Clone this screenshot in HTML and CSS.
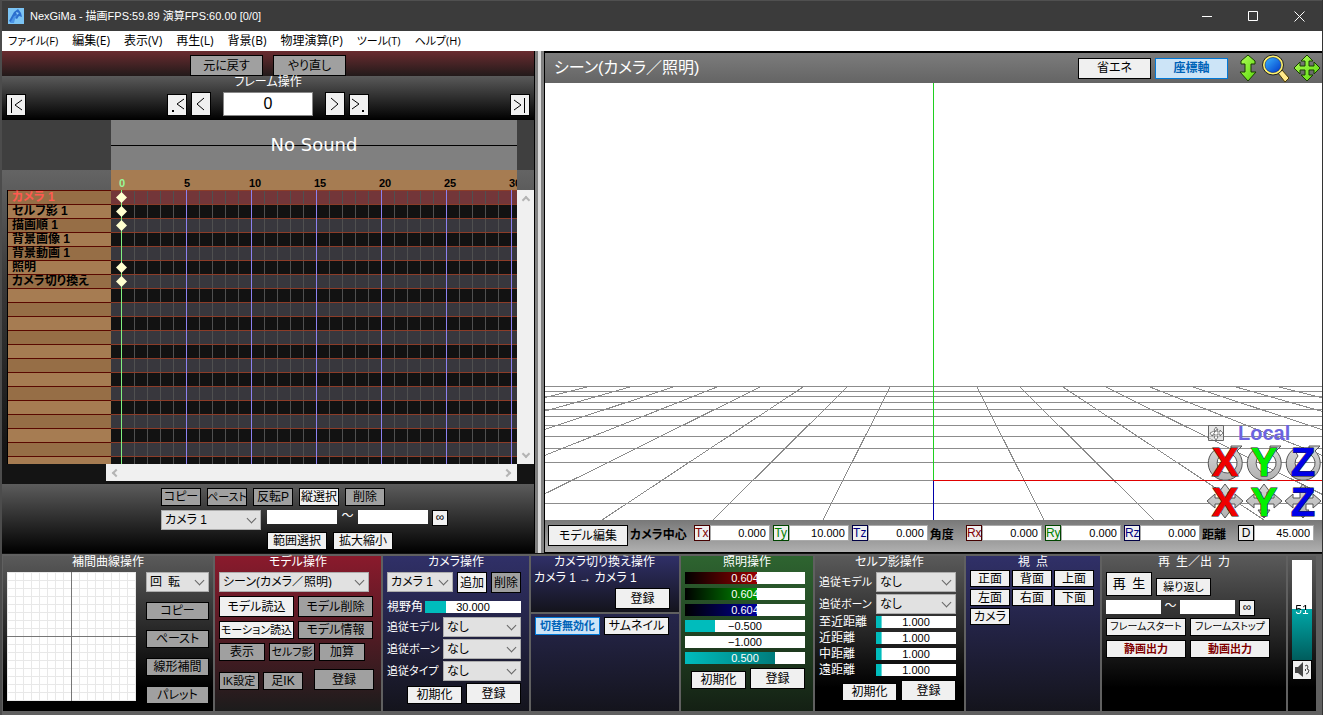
FILE: index.html
```html
<!DOCTYPE html>
<html lang="ja">
<head>
<meta charset="utf-8">
<title>NexGiMa</title>
<link rel="stylesheet" href="styles.css">
</head>
<body>
<svg class="defs" width="0" height="0" aria-hidden="true">
  <defs>
    <linearGradient id="lime" x1="0" y1="0" x2="1" y2="1"><stop offset="0" stop-color="#b4ff5a"/><stop offset="1" stop-color="#58d80a"/></linearGradient>
    <linearGradient id="metal" x1="0" y1="0" x2="0" y2="1"><stop offset="0" stop-color="#d8d8d8"/><stop offset="1" stop-color="#b0b0b0"/></linearGradient>
    <linearGradient id="lens" x1="0" y1="0" x2="1" y2="1"><stop offset="0" stop-color="#39b4ff"/><stop offset="1" stop-color="#0038c8"/></linearGradient>
    <symbol id="ring" viewBox="0 0 38 38">
      <path d="M10 6A17 17 0 1 0 31 8L36 3H25V14L27 12A10 10 0 1 1 14 13Z" fill="url(#metal)" stroke="#555" stroke-width="1"/>
    </symbol>
    <symbol id="cross" viewBox="0 0 38 38">
      <path d="M19 2l6 8h-3v6h7v-4l8 7-8 7v-4h-7v6h3l-6 8-6-8h3v-6H9v4l-8-7 8-7v4h7v-6h-3z" fill="url(#metal)" stroke="#555" stroke-width="1"/>
    </symbol>
  </defs>
</svg>
<div class="app">
  <header class="titlebar">
    <svg class="logo" viewBox="0 0 16 16" width="16" height="16" aria-hidden="true"><rect width="16" height="16" fill="#7cc4f4"/><path d="M1 13L6 4l4-3 3 4 1 4-3-1-2 3-2-1-3 5z" fill="#2c6fce"/><path d="M2 15l4-7 3-1-2 4-1 4z" fill="#4b94e6"/><path d="M8 4l3 1-2 2z" fill="#8fd0fa"/></svg>
    <h1 class="caption">NexGiMa - 描画FPS:59.89 演算FPS:60.00 [0/0]</h1>
    <button class="winbtn" aria-label="最小化"><svg viewBox="0 0 11 11" width="11" height="11"><path d="M0 5.500h10" stroke="#fff"/></svg></button>
    <button class="winbtn" aria-label="最大化"><svg viewBox="0 0 11 11" width="11" height="11"><path d="M.5.500h9v9h-9z" stroke="#fff" fill="none"/></svg></button>
    <button class="winbtn" aria-label="閉じる"><svg viewBox="0 0 11 11" width="11" height="11"><path d="M.5.500l10 10M10.500.5l-10 10" stroke="#fff"/></svg></button>
  </header>
  <nav class="menubar">
    <button class="kana">ファイル(F)</button><button>編集(E)</button><button>表示(V)</button><button>再生(L)</button><button>背景(B)</button><button>物理演算(P)</button><button class="kana">ツール(T)</button><button class="kana">ヘルプ(H)</button>
  </nav>

  <main class="workspace">
    <section class="left">
      <div class="history"><button class="btn off">元に戻す</button><button class="btn off">やり直し</button></div>
      <div class="frames">
        <h2 class="ptitle">フレーム操作</h2>
        <div class="framebar">
          <button class="btn step" aria-label="先頭"><svg viewBox="0 0 18 20"><path d="M4.500 3v15M15 5l-7 5 7 5"/></svg></button>
          <div class="framemid">
            <button class="btn step" aria-label="前のキー"><svg viewBox="0 0 18 20"><path d="M4 15h2v2H4z" fill="#000" stroke="none"/><path d="M16 4l-7 5 7 5"/></svg></button>
            <button class="btn step tall" aria-label="前"><svg viewBox="0 0 18 20"><path d="M12 4l-7 6 7 6"/></svg></button>
            <input class="frameno" value="0" aria-label="フレーム">
            <button class="btn step tall" aria-label="次"><svg viewBox="0 0 18 20"><path d="M5 4l7 6-7 6"/></svg></button>
            <button class="btn step" aria-label="次のキー"><svg viewBox="0 0 18 20"><path d="M12 15h2v2h-2z" fill="#000" stroke="none"/><path d="M2 4l7 5-7 5"/></svg></button>
          </div>
          <button class="btn step" aria-label="末尾"><svg viewBox="0 0 18 20"><path d="M13.500 3v15M3 5l7 5-7 5"/></svg></button>
        </div>
      </div>
      <div class="sound"><div class="wave"><span>No Sound</span></div></div>
      <div class="timeline">
        <div class="ruler"><span class="now">0</span><span>5</span><span>10</span><span>15</span><span>20</span><span>25</span><span>30</span></div>
        <ul class="names">
          <li class="sel">カメラ 1</li><li>セルフ影 1</li><li>描画順 1</li><li>背景画像 1</li><li>背景動画 1</li><li>照明</li><li>カメラ切り換え</li>
          <li></li><li></li><li></li><li></li><li></li><li></li><li></li><li></li><li></li><li></li><li></li><li></li><li></li>
        </ul>
        <ul class="track">
          <li class="sel key"></li><li class="key"></li><li class="key"></li><li></li><li></li><li class="key"></li><li class="key"></li>
          <li></li><li></li><li></li><li></li><li></li><li></li><li></li><li></li><li></li><li></li><li></li><li></li><li></li>
        </ul>
        <div class="scroll vert"><i class="chev up"></i><i class="chev down"></i></div>
        <div class="scroll horz"><i class="chev lt"></i><i class="chev rt"></i></div>
      </div>
      <div class="keyops">
        <div class="keybox">
          <div class="row g6"><button class="btn off w40">コピー</button><button class="btn off small w40">ペースト</button><button class="btn off w40">反転P</button><button class="btn w40">縦選択</button><button class="btn off w40">削除</button></div>
          <div class="row range"><span class="pick w100"><select aria-label="対象"><option>カメラ 1</option></select></span><input class="box w70" aria-label="開始"><span class="til">～</span><input class="box w70" aria-label="終了"><button class="btn inf">∞</button></div>
          <div class="row g6 indent"><button class="btn w60">範囲選択</button><button class="btn w60">拡大縮小</button></div>
        </div>
      </div>
    </section>
    <div class="splitter"></div>
    <section class="right">
      <header class="viewhead">
        <h2>シーン(カメラ／照明)</h2>
        <button class="btn head">省エネ</button><button class="btn head on">座標軸</button>
        <div class="tools">
          <svg viewBox="0 0 18 28" width="18" height="28"><path d="M9 1l7 6v3h-4v8h5l-8 9-8-9h5v-8H2V7z" fill="url(#lime)" stroke="#173d00" stroke-width="1"/></svg>
          <svg viewBox="0 0 28 28" width="28" height="28"><path d="M17 19l4-3 7 8-4 4z" fill="#ffe98a" stroke="#4a3a00"/><ellipse cx="12" cy="11" rx="10.500" ry="10" fill="#fff36a" stroke="#222"/><ellipse cx="12" cy="11" rx="8" ry="7.500" fill="url(#lens)" stroke="#102060" stroke-width=".6"/></svg>
          <svg viewBox="0 0 28 28" width="28" height="28"><path d="M14 1l6 6h-4v5h5V8l6 6-6 6v-4h-5v5h4l-6 6-6-6h4v-5H7v4l-6-6 6-6v4h5V7H8z" fill="url(#lime)" stroke="#173d00"/></svg>
        </div>
      </header>
      <div class="view">
        <svg class="floor" viewBox="0 0 777 437" preserveAspectRatio="xMidYMin slice" shape-rendering="crispEdges" aria-hidden="true">
          <g stroke="#8c8c8c" fill="none">
            <path d="M0 303.500h777M0 308.500h777M0 313.500h777M0 319.500h777M0 326.500h777M0 333.500h777M0 342.500h777M0 353.500h777M0 365.500h777M0 379.500h777M0 397.500h388M0 420.500h777"/>
            <path d="M345 304L278 437M302 304L168 437M258 304L57 437M215 304L-53 437M172 304L-163 437M128 304L-274 437M85 304L-384 437M42 304L-494 437M432 304L499 437M475 304L609 437M518 304L719 437M561 304L829 437M605 304L940 437M648 304L1050 437M691 304L1160 437M734 304L1271 437"/>
          </g>
          <rect x="388" y="0" width="1" height="397" fill="#1fd01f"/>
          <rect x="388" y="398" width="1" height="39" fill="#0000a8"/>
          <rect x="388" y="397" width="389" height="1" fill="#e00000"/>
        </svg>
        <div class="gizmo">
          <div class="local"><svg viewBox="0 0 16 16" width="16" height="16"><path d="M.5.500h15v15H.5z" fill="#d8d8d8" fill-opacity=".6" stroke="#666"/><path d="M8 2l2 3H9v2h3V5l3 3-3 3V9H9v3h1l-2 3-2-3h1V9L4 11 2 8l4-2 1 1V5H6zM4 11l5-7" fill="#fff" stroke="#555" stroke-width=".7"/></svg><span>Local</span></div>
          <div class="axes">
            <svg viewBox="0 0 38 38"><use href="#ring"/><text x="19" y="33" fill="#f00000">X</text></svg>
            <svg viewBox="0 0 38 38"><use href="#ring"/><text x="19" y="33" fill="#00f000">Y</text></svg>
            <svg viewBox="0 0 38 38"><use href="#ring"/><text x="19" y="33" fill="#0000e8">Z</text></svg>
            <svg viewBox="0 0 38 38"><use href="#cross"/><text x="19" y="34" fill="#f00000">X</text></svg>
            <svg viewBox="0 0 38 38"><use href="#cross"/><text x="19" y="34" fill="#00f000">Y</text></svg>
            <svg viewBox="0 0 38 38"><use href="#cross"/><text x="19" y="34" fill="#0000e8">Z</text></svg>
          </div>
        </div>
      </div>
      <footer class="coords">
        <button class="btn edit">モデル編集</button>
        <span class="grp first">カメラ中心</span>
        <div class="fields">
          <label class="coord r"><b>Tx</b><input value="0.000"></label><label class="coord g"><b>Ty</b><input value="10.000"></label><label class="coord b"><b>Tz</b><input value="0.000"></label>
        </div>
        <span class="grp">角度</span>
        <div class="fields">
          <label class="coord r"><b>Rx</b><input value="0.000"></label><label class="coord g"><b>Ry</b><input value="0.000"></label><label class="coord b"><b>Rz</b><input value="0.000"></label>
        </div>
        <span class="grp">距離</span>
        <div class="fields"><label class="coord"><b>D</b><input value="45.000"></label></div>
      </footer>
    </section>
  </main>

  <footer class="dock">
    <section class="panel">
      <h2 class="ptitle">補間曲線操作</h2>
      <div class="curve">
        <div class="graph"></div>
        <div class="stack"><span class="pick"><select aria-label="補間"><option>回&ensp;転</option></select></span><button class="btn off">コピー</button><button class="btn off">ペースト</button><button class="btn off">線形補間</button><button class="btn off">パレット</button></div>
      </div>
    </section>

    <section class="panel red">
      <h2 class="ptitle">モデル操作</h2>
      <div class="col g4">
        <span class="pick w150"><select aria-label="モデル"><option>シーン(カメラ／照明)</option></select></span>
        <div class="row g4"><button class="btn big w75">モデル読込</button><button class="btn big off w75">モデル削除</button></div>
        <div class="row g4"><button class="btn small w75">モーション読込</button><button class="btn off w75">モデル情報</button></div>
        <div class="row g4"><button class="btn off w46">表示</button><button class="btn off small w46">セルフ影</button><button class="btn off w46">加算</button></div>
        <div class="row g4 iks"><button class="btn off small w40">IK設定</button><button class="btn off w40">足IK</button><button class="btn big off w60 end">登録</button></div>
      </div>
    </section>

    <section class="panel blue">
      <h2 class="ptitle">カメラ操作</h2>
      <div class="row g4 camrow"><span class="pick w66"><select aria-label="カメラ"><option>カメラ 1</option></select></span><button class="btn big w30">追加</button><button class="btn big off w30">削除</button></div>
      <label class="field fov"><span>視野角</span><span class="slider"><input type="range" min="0" max="100" value="22" style="--fill:22%"><output>30.000</output></span></label>
      <div class="col g2">
        <label class="field drop"><span>追従モデル</span><span class="pick w78"><select><option>なし</option></select></span></label>
        <label class="field drop"><span>追従ボーン</span><span class="pick w78"><select><option>なし</option></select></span></label>
        <label class="field drop"><span>追従タイプ</span><span class="pick w78"><select><option>なし</option></select></span></label>
        <div class="row g4 pair"><button class="btn w55">初期化</button><button class="btn big w55">登録</button></div>
      </div>
    </section>

    <div class="split">
      <section class="panel blue cut">
        <h2 class="ptitle">カメラ切り換え操作</h2>
        <p class="flow">カメラ 1 → カメラ 1</p>
        <button class="btn big w55">登録</button>
      </section>
      <section class="panel night"><div class="row g4"><button class="btn on small w65">切替無効化</button><button class="btn w65">サムネイル</button></div></section>
    </div>

    <section class="panel green">
      <h2 class="ptitle">照明操作</h2>
      <div class="col g4 lights">
        <span class="slider lite cr"><input type="range" aria-label="赤" value="60" style="--fill:60%"><output>0.604</output></span>
        <span class="slider lite cg"><input type="range" aria-label="緑" value="60" style="--fill:60%"><output>0.604</output></span>
        <span class="slider lite cb"><input type="range" aria-label="青" value="60" style="--fill:60%"><output>0.604</output></span>
        <span class="slider"><input type="range" aria-label="X" value="25" style="--fill:25%"><output>−0.500</output></span>
        <span class="slider"><input type="range" aria-label="Y" value="0" style="--fill:0%"><output>−1.000</output></span>
        <span class="slider lite"><input type="range" aria-label="Z" value="75" style="--fill:75%"><output>0.500</output></span>
        <div class="row g4 pair"><button class="btn w55">初期化</button><button class="btn big w55">登録</button></div>
      </div>
    </section>

    <section class="panel">
      <h2 class="ptitle">セルフ影操作</h2>
      <div class="col g2 shadow">
        <label class="field drop"><span>追従モデル</span><span class="pick w80"><select><option>なし</option></select></span></label>
        <label class="field drop"><span>追従ボーン</span><span class="pick w80"><select><option>なし</option></select></span></label>
        <div class="col g4">
          <label class="field"><span>至近距離</span><span class="slider w80"><input type="range" value="7" style="--fill:7%"><output>1.000</output></span></label>
          <label class="field"><span>近距離</span><span class="slider w80"><input type="range" value="7" style="--fill:7%"><output>1.000</output></span></label>
          <label class="field"><span>中距離</span><span class="slider w80"><input type="range" value="7" style="--fill:7%"><output>1.000</output></span></label>
          <label class="field"><span>遠距離</span><span class="slider w80"><input type="range" value="7" style="--fill:7%"><output>1.000</output></span></label>
          <div class="row g4 pair"><button class="btn w55">初期化</button><button class="btn big w55">登録</button></div>
        </div>
      </div>
    </section>

    <section class="panel blue">
      <h2 class="ptitle tight">視&ensp;点</h2>
      <div class="angles"><button class="btn">正面</button><button class="btn">背面</button><button class="btn">上面</button><button class="btn">左面</button><button class="btn">右面</button><button class="btn">下面</button><button class="btn">カメラ</button></div>
    </section>

    <section class="panel">
      <h2 class="ptitle">再&ensp;生／出&ensp;力</h2>
      <div class="col g4">
        <div class="row g4 low"><button class="btn play">再&ensp;生</button><button class="btn small w55">繰り返し</button></div>
        <div class="row span"><input class="box w55" aria-label="開始"><span class="til">～</span><input class="box w55" aria-label="終了"><button class="btn inf">∞</button></div>
        <div class="row g4"><button class="btn tiny w80">フレームスタート</button><button class="btn tiny w80">フレームストップ</button></div>
        <div class="row g4"><button class="btn out w80">静画出力</button><button class="btn out w80">動画出力</button></div>
      </div>
    </section>

    <section class="panel volume">
      <span class="meter"><input type="range" aria-label="音量" value="51" style="--fill:51%"><output>51</output></span>
      <button class="btn mute" aria-label="ミュート"><svg viewBox="0 0 18 18" width="18" height="18"><path d="M2 6h3l5-5v15l-5-4H2z" fill="#444"/><path d="M12 5l2-1 1 2-1 2 2 1-1 3-2 1M12 8l1 1-1 1" fill="none" stroke="#444"/></svg></button>
    </section>
  </footer>
</div>
</body>
</html>
```
FILE: styles.css
```css
* { box-sizing: border-box; }
body {
  margin: 0;
  font: 12px/12px "Liberation Sans", "Noto Sans CJK JP", sans-serif;
  font-feature-settings: "palt";
  background: #505050;
  color: #fff;
}
button, input, select, output { font: inherit; font-feature-settings: inherit; color: #000; }
button, input, select { margin: 0; padding: 0; border: 0; border-radius: 0; }
h1, h2, p, ul { margin: 0; padding: 0; font-weight: 400; font-size: 12px; list-style: none; }
.defs { position: absolute; }

.app { display: flex; flex-direction: column; height: 100vh; min-height: 560px; border-left: 2px solid #4c4c4c; border-right: 1px solid #333; }

.titlebar { display: flex; align-items: center; height: 31px; flex: none; padding-left: 6px; background: #3b3b3b; border-top: 1px solid #505050; }
.logo { margin-right: 6px; }
.caption { flex: 1; white-space: nowrap; font-size: 11px; line-height: 16px; }
.winbtn { width: 46px; height: 30px; background: none; display: grid; place-items: center; }
.menubar { display: flex; height: 20px; flex: none; background: #fff; font-family: "Open Sans", "Noto Sans CJK JP", sans-serif; }
.menubar button { padding: 0 7px; background: none; white-space: nowrap; }
.menubar .kana { font-size: 11px; }
.menubar button:first-child { padding-left: 6px; }

/* buttons, drop-downs, sliders */
.btn { display: flex; align-items: center; justify-content: center; height: 18px; flex: none; border: 1px solid #000; background: #f0f0f0; white-space: nowrap; }
.btn.off { background: #a0a0a0; }
.btn.big { height: 21px; }
.btn.small { font-size: 11px; }
.btn.tiny { font-size: 10px; }
.btn.on { background: #cce4f7; border-color: #0078d7; color: #0063b8; font-weight: 700; }
.pick { position: relative; display: block; height: 20px; flex: none; }
.pick select { appearance: none; width: 100%; height: 100%; padding: 0 16px 0 3px; background: #e1e1e1; border: 1px solid #adadad; font-size: 12px; }
.pick::after { content: ""; position: absolute; right: 6px; top: 5px; width: 6px; height: 6px; border: solid #666; border-width: 0 1px 1px 0; transform: rotate(45deg); pointer-events: none; }
.box { height: 14px; background: #fff; }
.inf { width: 16px; height: 16px; padding-bottom: 2px; }
.til { text-align: center; flex: none; }
.slider { display: grid; height: 12px; --a: #00bcbc; --b: #00bcbc; font-size: 11px; }
.slider > * { grid-area: 1 / 1; min-width: 0; width: 100%; height: 12px; }
.slider input { appearance: none; background: linear-gradient(90deg, var(--a), var(--b)) 0 0 / var(--fill) 100% no-repeat #fff; }
.slider input::-webkit-slider-thumb, .meter input::-webkit-slider-thumb { appearance: none; width: 1px; height: 1px; opacity: 0; }
.slider output { text-align: center; pointer-events: none; }
.lite { --b: #007c7c; }
.lite output { color: #fff; }
.cr { --a: #000; --b: #900; }
.cg { --a: #000; --b: #009a00; }
.cb { --a: #000; --b: #00009a; }

.row { display: flex; align-items: flex-start; }
.col { display: flex; flex-direction: column; }
.g2 { gap: 2px; }
.g4 { gap: 4px; }
.g6 { gap: 6px; }
.w30 { width: 30px; }
.w40 { width: 40px; }
.w46 { width: 46px; }
.w55 { width: 55px; }
.w60 { width: 60px; }
.w65 { width: 65px; }
.w66 { width: 66px; }
.w70 { width: 70px; }
.w75 { width: 75px; }
.w78 { width: 78px; }
.w80 { width: 80px; }
.w100 { width: 100px; }
.w150 { width: 150px; }

.workspace { flex: 1; min-height: 0; display: grid; grid-template-columns: 532fr 10px 778fr; }

/* timeline side */
.left { display: flex; flex-direction: column; min-height: 0; min-width: 0; border-bottom: 1px solid #666; }
.history { display: flex; justify-content: center; gap: 10px; height: 25px; flex: none; padding-top: 4px; background: linear-gradient(#6a2c30, #221a1a); }
.history .btn { width: 73px; height: 21px; }
.frames { height: 44px; flex: none; background: linear-gradient(#5a5a5a, #000); }
.ptitle { height: 16px; text-align: center; white-space: nowrap; }
.framebar { display: flex; justify-content: space-between; padding: 0 4px; }
.framebar > .btn { margin-top: 2px; }
.framemid { display: flex; align-items: flex-end; gap: 4px; }
.btn.step { width: 20px; height: 22px; }
.btn.step.tall { height: 24px; }
.step svg { width: 18px; height: 20px; flex: none; fill: none; stroke: #000; }
.frameno { width: 90px; height: 24px; margin: 0 8px; text-align: center; font-size: 16px; border: 1px solid #888; background: #fff; }
.sound { height: 50px; flex: none; padding: 0 17px 0 109px; background: #3f3f3f; }
.wave { height: 50px; display: grid; place-items: center; background: linear-gradient(#000, #000) 0 25px / 100% 1px no-repeat #808080; font: 18px/20px "DejaVu Sans", sans-serif; }
.timeline { flex: 1; min-height: 0; display: grid; grid-template: 20px minmax(0, 1fr) 17px / 5px 99px 5px minmax(0, 1fr) 17px; padding-bottom: 3px; background: linear-gradient(#646464, #3a3a3a 35%, #141414 90%); }
.ruler { grid-area: 1 / 4; display: flex; overflow: hidden; padding-left: 8px; background: #a67c52; color: #000; font-size: 11px; font-weight: 700; line-height: 26px; }
.ruler span { width: 65px; flex: none; }
.ruler .now { color: #98f898; }
.names { grid-area: 2 / 2 / 3 / 4; overflow: hidden; border-left: 1px solid #000; color: #000; font-weight: 700; }
.names li { height: 14px; padding-left: 4px; border-top: 1px solid #5a0800; background: #966e46; white-space: nowrap; }
.names li:nth-child(even) { background: #a67c52; }
.names .sel { color: #ff5a50; }
.track { grid-area: 2 / 4; position: relative; overflow: hidden; }
.track li { height: 14px; padding: 1px 0 0 5px; border-top: 1px solid #8c3c28; background: linear-gradient(90deg, #505050 1px, transparent 1px) 10px 0 / 13px 100% #38373d; }
.track li:nth-child(even) { background-color: #121212; }
.track .sel { background-color: #733639; }
.track::after { content: ""; position: absolute; inset: 0; background: linear-gradient(#80f080, #80f080) 10px 0 / 1px 100% no-repeat, linear-gradient(90deg, #8c80f0 1px, transparent 1px) 10px 0 / 65px 100%; }
.key::before { content: ""; display: block; position: relative; z-index: 1; width: 11px; height: 11px; background: #ffffd0; clip-path: polygon(50% 0, 100% 50%, 50% 100%, 0 50%); }
.scroll { display: flex; justify-content: space-between; align-items: center; padding: 7px; background: #f0f0f0; }
.vert { grid-area: 2 / 5; flex-direction: column; }
.horz { grid-area: 3 / 3 / 4 / 5; }
.chev { width: 6px; height: 6px; border: solid #b4b4b4; border-width: 2px 2px 0 0; }
.up { transform: rotate(-45deg); }
.down { transform: rotate(135deg); }
.lt { transform: rotate(-135deg); }
.rt { transform: rotate(45deg); }
.keyops { height: 69px; flex: none; padding: 4px 0 0 159px; background: linear-gradient(#5c5c5c, #000); }
.keybox { display: flex; flex-direction: column; gap: 4px; width: 287px; }
.range .pick { margin-right: 6px; }
.range .til { width: 21px; }
.range .inf { margin-left: 4px; }
.range { height: 18px; }
.indent { padding-left: 106px; }
.splitter { background: linear-gradient(90deg, #000 1px, #808080 1px 4px, #dcdcdc 4px 7px, #808080 7px); }

/* scene side */
.right { display: flex; flex-direction: column; min-width: 0; border: solid #000; border-width: 2px 0 2px 1px; }
.viewhead { display: flex; align-items: center; gap: 4px; height: 30px; flex: none; padding: 0 1px 0 9px; background: linear-gradient(#7c7c7c, #646464); }
.viewhead h2 { flex: 1; font-size: 16px; line-height: 20px; white-space: nowrap; }
.btn.head { width: 73px; height: 21px; }
.tools { display: flex; align-items: center; gap: 4px; padding-left: 7px; }
.view { position: relative; flex: 1; min-height: 0; background: #fff; overflow: hidden; }
.floor { display: block; width: 100%; height: 100%; }
.gizmo { position: absolute; right: 0; bottom: 0; width: 116px; }
.local { display: flex; align-items: center; gap: 14px; padding-left: 2px; color: #6c64e0; font-size: 20px; font-weight: 700; line-height: 20px; }
.axes { display: grid; grid-template-columns: repeat(3, 38px); gap: 1px; }
.axes svg { width: 38px; height: 38px; overflow: visible; }
.axes text { font: 700 40px "Liberation Sans", sans-serif; text-anchor: middle; stroke: #222; stroke-width: 1px; paint-order: stroke; }
.coords { display: flex; align-items: flex-start; height: 32px; flex: none; padding: 5px 8px 0 3px; background: linear-gradient(#787878, #b0b0b0); color: #000; }
.edit { width: 80px; height: 21px; }
.grp { flex: 1 0 auto; padding: 4px 0 0 2px; font-weight: 700; }
.first { flex: none; padding-right: 7px; }
.fields { display: flex; gap: 3px; }
.coord { display: flex; width: 76px; height: 16px; background: #fff; }
.coord b { width: 16px; border: 1px solid #000; background: #f0f0f0; font-weight: 400; line-height: 14px; text-align: center; }
.coord input { flex: 1; min-width: 0; padding-right: 3px; border: 1px solid #aaa; background: #fff; text-align: right; font-size: 11px; }
.r b { color: #800000; border-color: #400; }
.g b { color: #008000; border-color: #040; }
.b b { color: #000080; border-color: #004; }

/* bottom dock */
.dock { flex: none; display: grid; grid-template-columns: 210fr 166fr 146fr 148fr 132fr 149fr 134fr 184fr 28fr; gap: 2px; padding: 2px 6px 4px 1px; background: #606060; border-top: 1px solid #111; }
.panel { min-width: 0; padding: 0 4px 7px; background: linear-gradient(#5a5a5a, #000 85%); }
.panel.red { background: linear-gradient(#8a1a2c, #1c1c1c); }
.panel.blue { background: linear-gradient(#303068, #14141c); }
.panel.green { background: linear-gradient(#2e6430, #142014); }
.panel.night { background: linear-gradient(#26264c, #14141c); flex: 1; padding-top: 3px; }
.curve { display: flex; justify-content: space-between; }
.graph { width: 129px; height: 129px; background: linear-gradient(#777, #777) 64px 0 / 1px 100% no-repeat, linear-gradient(#777, #777) 0 64px / 100% 1px no-repeat, linear-gradient(90deg, #e8e8e8 1px, transparent 1px) 0 0 / 8px 8px, linear-gradient(#e8e8e8 1px, transparent 1px) 0 0 / 8px 8px, #fff; }
.stack { width: 63px; display: flex; flex-direction: column; gap: 10px; }
.iks { align-items: flex-end; padding-top: 4px; }
.end { margin-left: 7px; }
.field { display: flex; justify-content: space-between; align-items: center; white-space: nowrap; }
.drop { font-size: 11px; }
.fov { margin: 8px 0 4px; gap: 2px; }
.fov .slider { width: 98px; }
.pair { align-items: flex-end; justify-content: flex-end; }
.lights, .shadow { padding-right: 4px; }
.panel.blue .field, .camrow, .panel.blue .pair { margin-right: 4px; }
.split { display: flex; flex-direction: column; gap: 2px; min-width: 0; }
.cut { height: 56px; padding-bottom: 0; padding-left: 3px; }
.cut .btn { margin: 4px 5px 0 auto; }
.tight { height: 14px; }
.angles { display: grid; grid-template-columns: repeat(3, 40px); gap: 2px; }
.angles .btn { height: 17px; }
.low { align-items: flex-end; }
.play { width: 46px; height: 24px; font-size: 13px; }
.span { height: 14px; }
.span .til { width: 19px; }
.span .inf { margin-left: 4px; }
.btn.out { color: #800000; font-weight: 700; font-size: 11px; }
.volume { padding: 4px 4px 0; }
.meter { display: grid; width: 20px; height: 100px; }
.meter > * { grid-area: 1 / 1; }
.meter input { appearance: none; writing-mode: vertical-lr; direction: rtl; width: 20px; height: 100px; background: linear-gradient(#00a8a8, #005c5c) 0 100% / 100% var(--fill) no-repeat #fff; }
.meter output { align-self: center; text-align: center; pointer-events: none; color: transparent; background: linear-gradient(#000 50%, #fff 50%); background-clip: text; }
.mute { width: 20px; height: 20px; }
```
